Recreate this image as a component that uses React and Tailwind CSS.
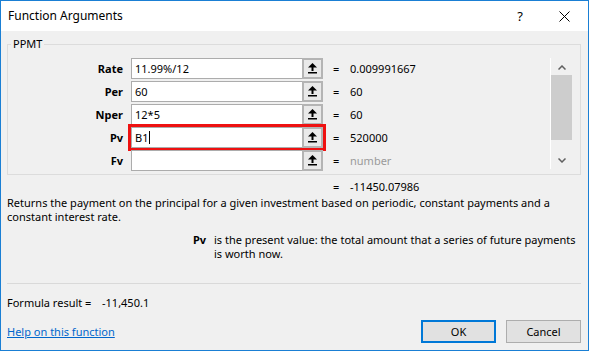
import React from 'react';

function RefArrow() {
    return (
        <svg width="9" height="11" viewBox="0 0 9 11" fill="#000">
            <polygon points="4.5,0 0,4.5 9,4.5" />
            <rect x="3.5" y="4" width="2" height="4" />
            <rect x="0" y="9" width="9" height="1.5" />
        </svg>
    );
}

const args = [
    { label: 'Rate', text: '11.99%/12', value: '0.009991667' },
    { label: 'Per', text: '60', value: '60' },
    { label: 'Nper', text: '12*5', value: '60' },
    { label: 'Pv', text: 'B1', value: '520000', active: true },
    { label: 'Fv', text: '', value: 'number', empty: true },
];

export default function App() {
    return (
        <div className="w-[589px] h-[351px] border border-[#1a7fd4] bg-[#f0f0f0] flex flex-col overflow-hidden text-[11px] leading-[14px] text-black whitespace-nowrap font-['Noto_Sans',sans-serif]">

            {/* Title bar */}
            <div className="h-[30px] bg-white flex items-center pl-[7px] shrink-0">
                <span className="flex-1 text-[12px]">Function Arguments</span>
                <span className="w-[10px] text-[13px] mr-[34px] text-center">?</span>
                <svg width="11" height="11" viewBox="0 0 11 11" className="mr-[18px]" stroke="#000" strokeWidth="1">
                    <line x1="0.5" y1="0.5" x2="10.5" y2="10.5" />
                    <line x1="10.5" y1="0.5" x2="0.5" y2="10.5" />
                </svg>
            </div>

            <div className="flex-1 flex flex-col pl-[6px] pr-[7px]">

                {/* Group box */}
                <fieldset className="mt-[5px] border border-[#dcdcdc] pb-[3px]">
                    <legend className="ml-[3px] px-[2px] leading-[16px]">PPMT</legend>
                    <div className="flex pt-[6px]">
                        <div className="w-[542px] flex flex-col gap-[2px]">
                            {args.map(arg => (
                                <div key={arg.label} className="flex items-center h-[21px]">
                                    <div className="w-[115px] text-right font-bold">{arg.label}</div>
                                    <div className={`ml-[8px] w-[192px] h-[21px] flex bg-white border border-[#acacac] ${arg.active ? 'outline-[3px] outline-solid outline-[#ee1111] outline-offset-[0px]' : ''}`}>
                                        <div className="flex-1 pl-[3px] flex items-center">
                                            {arg.text}
                                            {arg.active && <span className="w-px h-[13px] bg-black ml-px" />}
                                        </div>
                                        <div className="w-[21px] -mt-px -mb-px -mr-px border-2 border-[#b4b4b4] bg-[#e9e9e9] flex items-center justify-center">
                                            <RefArrow />
                                        </div>
                                    </div>
                                    <div className="ml-[10px] w-[17px]">=</div>
                                    <div className={arg.empty ? 'text-[#9a9a9a]' : ''}>{arg.value}</div>
                                </div>
                            ))}
                        </div>
                        <div className="w-[22px] h-[111px] border-l border-white flex flex-col items-center">
                            <svg width="8" height="5" viewBox="0 0 8 5" className="mt-[7px]" fill="none" stroke="#606060" strokeWidth="1.5">
                                <polyline points="0.5,4.5 4,1 7.5,4.5" />
                            </svg>
                            <div className="w-[21px] h-[65px] mt-[5px] bg-[#cdcdcd]" />
                            <div className="flex-1" />
                            <svg width="8" height="5" viewBox="0 0 8 5" className="mb-[6px]" fill="none" stroke="#606060" strokeWidth="1.5">
                                <polyline points="0.5,0.5 4,4 7.5,0.5" />
                            </svg>
                        </div>
                    </div>
                </fieldset>

                {/* Result */}
                <div className="mt-[5px] flex pl-[326px]">
                    <span className="w-[17px]">=</span>
                    <span>-11450.07986</span>
                </div>

                {/* Description */}
                <p className="mt-[2px]">
                    Returns the payment on the principal for a given investment based on periodic, constant payments and a<br />
                    constant interest rate.
                </p>

                <div className="mt-[9px] flex">
                    <span className="ml-[186px] w-[21px] font-bold">Pv</span>
                    <span>is the present value: the total amount that a series of future payments<br />is worth now.</span>
                </div>

                <div className="mt-[22px] border-t border-[#d9d9d9]" />

                <div className="mt-[12px] flex">
                    <span className="w-[95px]">Formula result =</span>
                    <span>-11,450.1</span>
                </div>

                <div className="mt-[10px] flex items-center h-[23px]">
                    <a className="flex-1 text-[#0066cc] underline">Help on this function</a>
                    <button className="w-[75px] h-[23px] border-2 border-[#0078d7] bg-[#e1e1e1]">OK</button>
                    <button className="ml-[10px] w-[75px] h-[23px] border border-[#adadad] bg-[#e1e1e1]">Cancel</button>
                </div>
            </div>
        </div>
    );
}
